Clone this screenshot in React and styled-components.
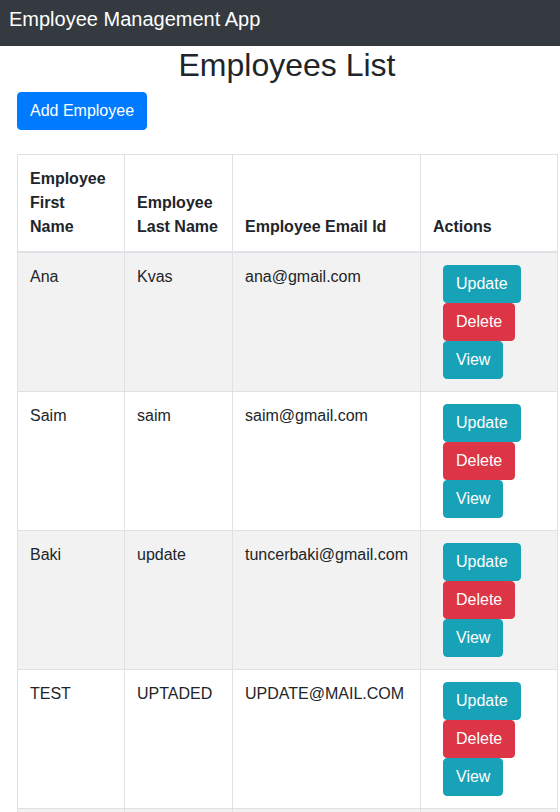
import React from "react";
import styled, { createGlobalStyle } from "styled-components";

const GlobalStyle = createGlobalStyle`
  body {
    margin: 0;
    font-family: "Liberation Sans", Arial, sans-serif;
    font-size: 16px;
    line-height: 1.5;
    color: #212529;
    background: #fff;
  }
`;

const Navbar = styled.header`
  background: #343a40;
  height: 46px;
  display: flex;
  align-items: center;
  padding: 0 9px;
  box-sizing: border-box;
`;

const Brand = styled.div`
  color: #fff;
  font-size: 20px;
  line-height: 30px;
  margin-top: -9px;
`;

const Container = styled.main`
  margin-left: 17px;
  width: 540px;
`;

const Title = styled.h2`
  margin: 0 0 8px;
  font-size: 32px;
  font-weight: 500;
  line-height: 1.2;
  text-align: center;
`;

const Button = styled.button`
  display: inline-block;
  font-family: inherit;
  font-size: 16px;
  line-height: 24px;
  padding: 6px 12px;
  border: 1px solid ${(p) => p.$bg};
  border-radius: 4px;
  background: ${(p) => p.$bg};
  color: #fff;
  margin-left: ${(p) => p.$ml || 0}px;
  vertical-align: middle;
  cursor: pointer;
`;

const Toolbar = styled.div`
  margin-bottom: 24px;
`;

const Table = styled.table`
  width: 540px;
  border-collapse: collapse;
  table-layout: fixed;
`;

const Th = styled.th`
  box-sizing: border-box;
  width: ${(p) => p.$w}px;
  border: 1px solid #dee2e6;
  border-bottom: 2px solid #dee2e6;
  padding: 12px;
  text-align: left;
  vertical-align: bottom;
  font-weight: 700;
`;

const Tr = styled.tr`
  background: ${(p) => (p.$striped ? "#f2f2f2" : "#fff")};
`;

const Td = styled.td`
  border: 1px solid #dee2e6;
  padding: 12px;
  vertical-align: top;
  word-wrap: break-word;
`;

const ActionCell = styled(Td)`
  line-height: 0;
`;

const employees = [
  { first: "Ana", last: "Kvas", email: "ana@gmail.com" },
  { first: "Saim", last: "saim", email: "saim@gmail.com" },
  { first: "Baki", last: "update", email: "tuncerbaki@gmail.com" },
  { first: "TEST", last: "UPTADED", email: "UPDATE@MAIL.COM" },
  { first: "John", last: "Doe", email: "john@gmail.com" },
];

export default function App() {
  return (
    <>
      <GlobalStyle />
      <Navbar>
        <Brand>Employee Management App</Brand>
      </Navbar>
      <Container>
        <Title>Employees List</Title>
        <Toolbar>
          <Button $bg="#007bff">Add Employee</Button>
        </Toolbar>
        <Table>
          <thead>
            <tr>
              <Th $w={107}>Employee First Name</Th>
              <Th $w={108}>Employee Last Name</Th>
              <Th $w={188}>Employee Email Id</Th>
              <Th $w={137}>Actions</Th>
            </tr>
          </thead>
          <tbody>
            {employees.map((e, i) => (
              <Tr key={i} $striped={i % 2 === 0}>
                <Td>{e.first}</Td>
                <Td>{e.last}</Td>
                <Td>{e.email}</Td>
                <ActionCell>
                  <Button $bg="#17a2b8" $ml={10}>Update</Button>
                  <Button $bg="#dc3545" $ml={10}>Delete</Button>
                  <Button $bg="#17a2b8" $ml={10}>View</Button>
                </ActionCell>
              </Tr>
            ))}
          </tbody>
        </Table>
      </Container>
    </>
  );
}
